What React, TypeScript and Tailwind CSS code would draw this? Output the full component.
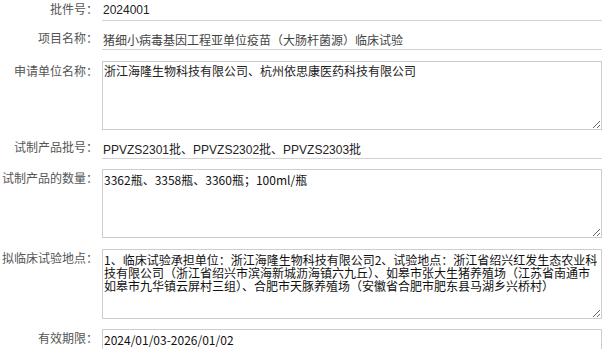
import React from 'react';

const sans = "font-['Liberation_Sans','Noto_Sans_CJK_SC',sans-serif]";
const song = "font-['Noto_Sans_CJK_SC',sans-serif]";

const Label = ({ text, className = '' }: { text: string; className?: string }) => (
  <div className={`w-[98px] shrink-0 text-right text-[12px] text-[#555] ${sans} ${className}`}>{text}</div>
);

const LineField = ({ label, value, className = '', valueClass = 'text-[#222]' }: { label: string; value: string; className?: string; valueClass?: string }) => (
  <div className={`flex items-start ${className}`}>
    <Label text={label} className="leading-[20px]" />
    <input
      readOnly
      defaultValue={value}
      className={`ml-[4px] w-[500px] h-[21px] border-b border-[#d2d2d2] px-[1px] text-[12px] leading-[20px] outline-none ${sans} ${valueClass}`}
    />
  </div>
);

const AreaField = ({
  label,
  value,
  className = '',
  height,
  mono = true,
}: {
  label: string;
  value: string;
  className?: string;
  height: string;
  mono?: boolean;
}) => (
  <div className={`flex items-start ${className}`}>
    <Label text={label} className={mono ? 'leading-[13px] pt-[4px]' : 'leading-[18px] pt-[2px]'} />
    <textarea
      readOnly
      defaultValue={value}
      className={`ml-[4px] w-[500px] ${height} border border-[#cdcdcd] bg-white px-[1px] text-[12px] outline-none overflow-hidden ${
        mono ? `${song} leading-[13px] pt-[3px] text-[#111]` : `${sans} leading-[18px] pt-[1px] text-[#222]`
      }`}
    />
  </div>
);

export default function App() {
  return (
    <div className="w-[611px] bg-white flex flex-col">
      <LineField label="批件号：" value="2024001" />
      <LineField label="项目名称：" value="猪细小病毒基因工程亚单位疫苗（大肠杆菌源）临床试验" className="mt-[8px]" valueClass="text-[#444]" />
      <AreaField
        label="申请单位名称："
        value="浙江海隆生物科技有限公司、杭州依思康医药科技有限公司"
        className="mt-[11px]"
        height="h-[69px]"
        mono={false}
      />
      <LineField label="试制产品批号：" value="PPVZS2301批、PPVZS2302批、PPVZS2303批" className="mt-[8px]" />
      <AreaField label="试制产品的数量：" value="3362瓶、3358瓶、3360瓶；100ml/瓶" className="mt-[10px]" height="h-[69px]" />
      <AreaField
        label="拟临床试验地点："
        value="1、临床试验承担单位：浙江海隆生物科技有限公司2、试验地点：浙江省绍兴红发生态农业科技有限公司（浙江省绍兴市滨海新城沥海镇六九丘）、如皋市张大生猪养殖场（江苏省南通市如皋市九华镇云屏村三组）、合肥市天豚养殖场（安徽省合肥市肥东县马湖乡兴桥村）"
        className="mt-[11px]"
        height="h-[70px]"
      />
      <AreaField label="有效期限：" value="2024/01/03-2026/01/02" className="mt-[10px]" height="h-[69px]" />
    </div>
  );
}
